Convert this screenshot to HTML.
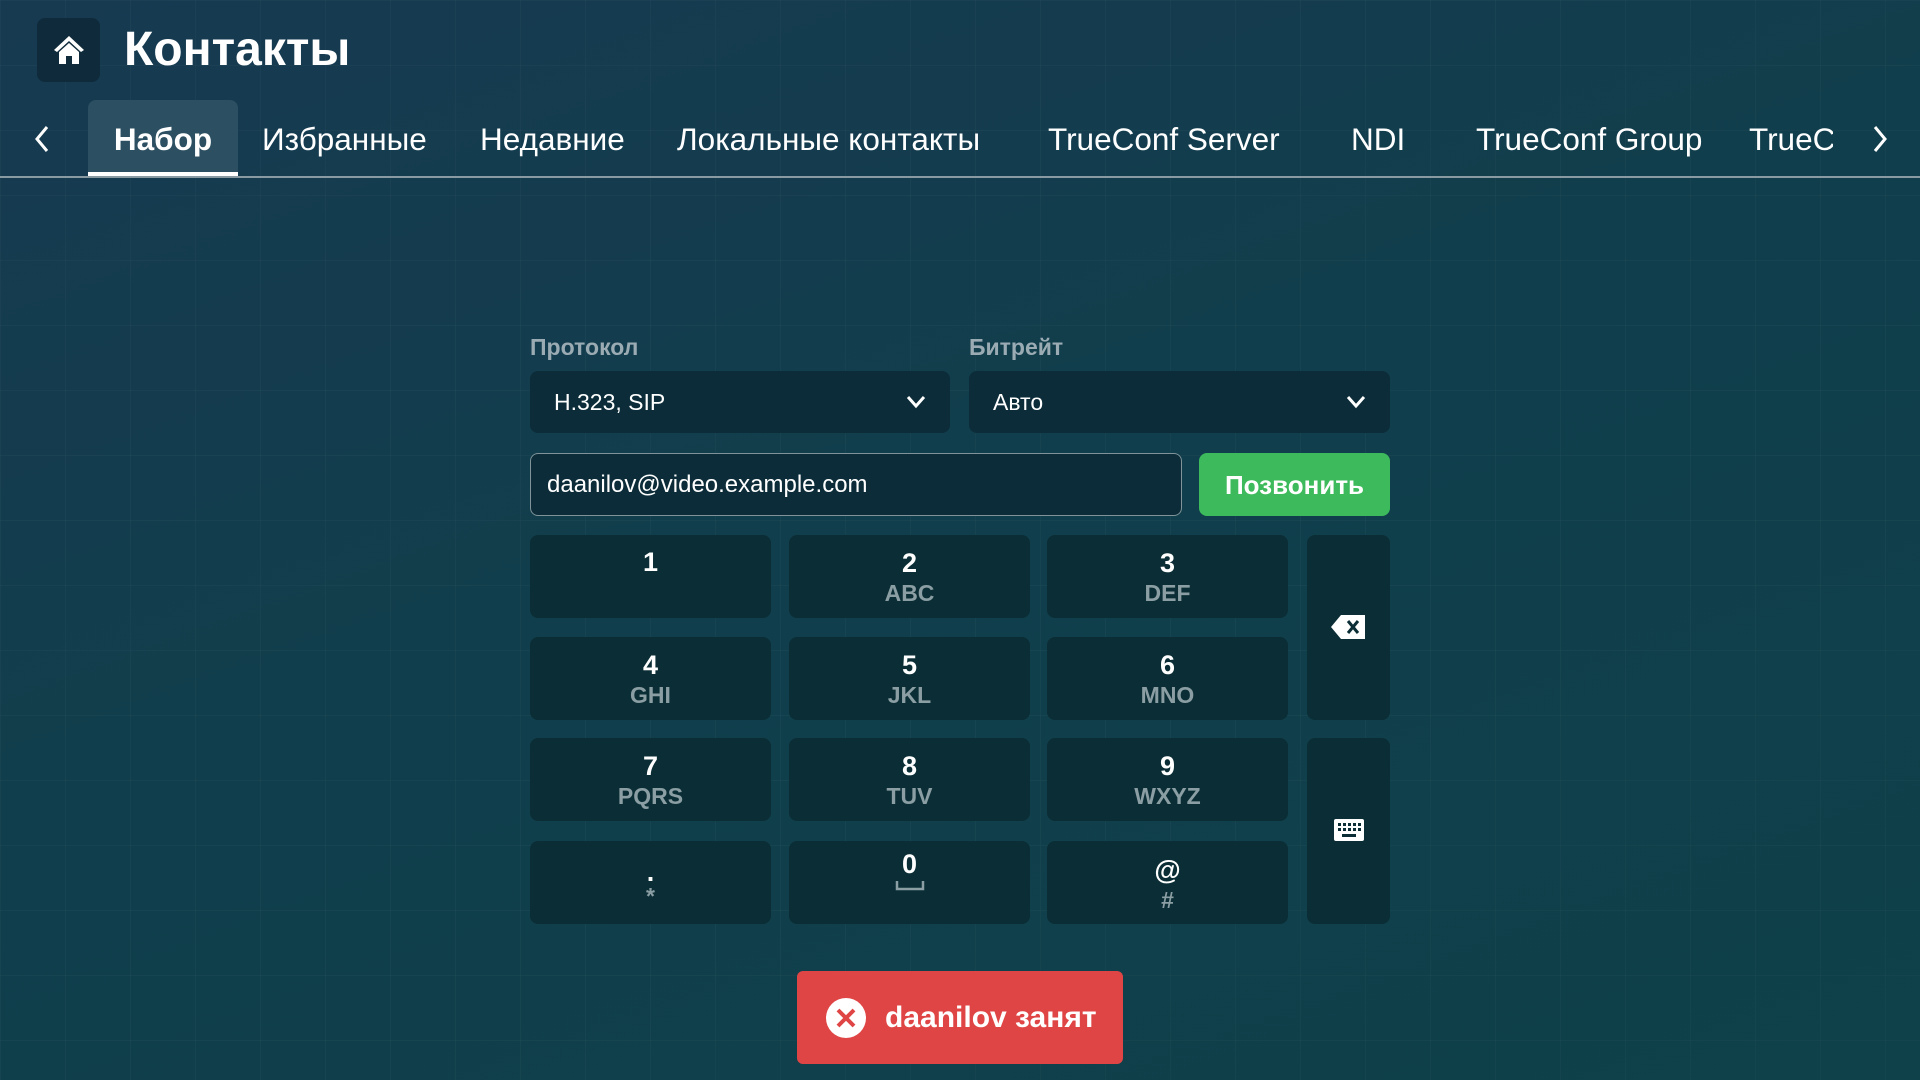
<!DOCTYPE html>
<html><head><meta charset="utf-8"><style>
*{box-sizing:border-box;margin:0;padding:0}
body{width:1920px;height:1080px;overflow:hidden;font-family:"Liberation Sans",sans-serif;color:#fff;
background:linear-gradient(160deg,#173a51 0%,#113e4c 45%,#0e414a 100%);position:relative}
.grid{position:absolute;inset:0;background-image:linear-gradient(rgba(255,255,255,.025) 1px,transparent 1px),linear-gradient(90deg,rgba(255,255,255,.025) 1px,transparent 1px);background-size:65px 65px}
.abs{position:absolute}
.home{left:37px;top:18px;width:63px;height:64px;background:#0f2a3a;border-radius:8px;display:flex;align-items:center;justify-content:center}
.title{left:124px;top:20px;font-size:48px;font-weight:bold;line-height:60px}
.tabline{left:0;top:176px;width:1920px;height:2px;background:#8a9aa3}
.tab{top:100px;height:76px;line-height:78px;font-size:31.5px;white-space:nowrap}
.active{left:88px;width:150px;background:#2c4f62;border-radius:8px 8px 0 0;text-align:center;font-weight:bold;border-bottom:4px solid #fff}
.lbl{font-size:23px;font-weight:bold;color:#9aabb3;top:334px}
.sel{top:371px;height:62px;background:#0b2c38;border-radius:8px;font-size:23px;line-height:62px;padding-left:24px}
.sel svg{position:absolute;right:24px;top:24px}
.inp{left:530px;top:453px;width:652px;height:63px;border:1.5px solid #7f9399;border-radius:8px;background:#0b2c38;font-size:24px;line-height:62px;padding-left:16px}
.btn{left:1199px;top:453px;width:191px;height:63px;background:#3dbb5c;border-radius:8px;font-size:26px;font-weight:bold;text-align:center;line-height:64px}
.key{background:#0b2e36;border-radius:8px;text-align:center;width:241px;height:83px}
.key b{display:block;font-size:27px;margin-top:13px;line-height:30px}
.key span{display:block;font-size:23px;color:#8a9ea3;font-weight:bold;line-height:30px}
.toast{left:797px;top:971px;width:326px;height:93px;background:#e04545;border-radius:6px;display:flex;align-items:center;padding-left:28px;font-size:30px;font-weight:bold}
</style></head><body><div class="grid"></div>
<div class="abs home"><svg width="36" height="34" viewBox="0 0 36 34"><path d="M18 3 L3 17 L6 19 L18 8 L30 19 L33 17 Z" fill="#fff"/><path d="M8 19 L18 10 L28 19 V31 H21 V23 H15 V31 H8 Z" fill="#fff"/></svg></div>
<div class="abs title">Контакты</div>
<svg class="abs" style="left:32px;top:124px" width="20" height="30"><path d="M15 3 L5 15 L15 27" stroke="#fff" stroke-width="3" fill="none"/></svg>
<div class="abs tab active">Набор</div>
<div class="abs tab" style="left:262px">Избранные</div>
<div class="abs tab" style="left:480px">Недавние</div>
<div class="abs tab" style="left:677px">Локальные контакты</div>
<div class="abs tab" style="left:1048px">TrueConf Server</div>
<div class="abs tab" style="left:1351px">NDI</div>
<div class="abs tab" style="left:1476px">TrueConf Group</div>
<div class="abs tab" style="left:1749px;width:84px;overflow:hidden">TrueConf Room</div>
<svg class="abs" style="left:1870px;top:124px" width="20" height="30"><path d="M5 3 L15 15 L5 27" stroke="#fff" stroke-width="3" fill="none"/></svg>
<div class="abs tabline"></div>
<div class="abs lbl" style="left:530px">Протокол</div>
<div class="abs lbl" style="left:969px">Битрейт</div>
<div class="abs sel" style="left:530px;width:420px">H.323, SIP<svg width="20" height="14"><path d="M2 2 L10 11 L18 2" stroke="#fff" stroke-width="3" fill="none"/></svg></div>
<div class="abs sel" style="left:969px;width:421px">Авто<svg width="20" height="14"><path d="M2 2 L10 11 L18 2" stroke="#fff" stroke-width="3" fill="none"/></svg></div>
<div class="abs inp">daanilov@video.example.com</div>
<div class="abs btn">Позвонить</div>
<div class="abs key" style="left:530px;top:535px"><b style="margin-top:12px">1</b></div>
<div class="abs key" style="left:789px;top:535px"><b>2</b><span>ABC</span></div>
<div class="abs key" style="left:1047px;top:535px"><b>3</b><span>DEF</span></div>
<div class="abs key" style="left:530px;top:637px"><b>4</b><span>GHI</span></div>
<div class="abs key" style="left:789px;top:637px"><b>5</b><span>JKL</span></div>
<div class="abs key" style="left:1047px;top:637px"><b>6</b><span>MNO</span></div>
<div class="abs key" style="left:530px;top:738px"><b>7</b><span>PQRS</span></div>
<div class="abs key" style="left:789px;top:738px"><b>8</b><span>TUV</span></div>
<div class="abs key" style="left:1047px;top:738px"><b>9</b><span>WXYZ</span></div>
<div class="abs key" style="left:530px;top:841px"><b style="margin-top:16px">.</b><span style="margin-top:-6px">*</span></div>
<div class="abs key" style="left:789px;top:841px"><b style="margin-top:8px">0</b><svg width="30" height="14"><path d="M2 2 V10 H28 V2" stroke="#8a9ea3" stroke-width="2.5" fill="none"/></svg></div>
<div class="abs key" style="left:1047px;top:841px"><b style="margin-top:14px">@</b><span>#</span></div>
<div class="abs key" style="left:1307px;top:535px;width:83px;height:185px"><svg style="margin-top:78px" width="38" height="28" viewBox="0 0 38 28"><path d="M11 2 H35 V26 H11 L1 14 Z" fill="#fff"/><path d="M18 8 L28 20 M28 8 L18 20" stroke="#0b2e36" stroke-width="3"/></svg></div>
<div class="abs key" style="left:1307px;top:738px;width:83px;height:186px"><svg style="margin-top:80px" width="32" height="24" viewBox="0 0 32 24"><rect x="1" y="1" width="30" height="22" rx="2" fill="#fff"/><g fill="#0b2e36"><rect x="5" y="5" width="3" height="3"/><rect x="10" y="5" width="3" height="3"/><rect x="15" y="5" width="3" height="3"/><rect x="20" y="5" width="3" height="3"/><rect x="25" y="5" width="3" height="3"/><rect x="5" y="10" width="3" height="3"/><rect x="10" y="10" width="3" height="3"/><rect x="15" y="10" width="3" height="3"/><rect x="20" y="10" width="3" height="3"/><rect x="25" y="10" width="3" height="3"/><rect x="9" y="16" width="14" height="3"/></g></svg></div>
<div class="abs toast"><svg width="42" height="42" viewBox="0 0 42 42"><circle cx="21" cy="21" r="20" fill="#fff"/><path d="M13 13 L29 29 M29 13 L13 29" stroke="#e04545" stroke-width="4"/></svg><span style="margin-left:18px">daanilov занят</span></div>
</body></html>
